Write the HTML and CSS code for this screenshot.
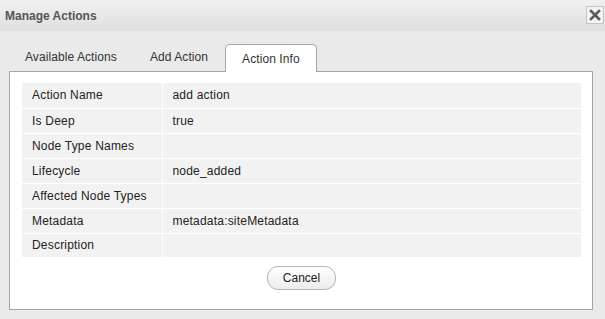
FILE: index.html
```html
<!DOCTYPE html>
<html lang="en">
<head>
<meta charset="utf-8">
<title>Manage Actions</title>
<link rel="stylesheet" href="styles.css">
</head>
<body>
<div class="dialog">
  <header class="dlg-head">
    <h1>Manage Actions</h1>
    <button class="dlg-close" title="Close">
      <svg width="12" height="12" viewBox="0 0 12 12"><path d="M2 2 L10 10 M10 2 L2 10" stroke="#5a5a5a" stroke-width="2.6" stroke-linecap="square"/></svg>
    </button>
  </header>

  <div class="dlg-body">
    <ul class="tabs">
      <li>Available Actions</li>
      <li>Add Action</li>
      <li class="active">Action Info</li>
    </ul>

    <div class="panel">
      <table class="info">
        <tr><th>Action Name</th><td>add action</td></tr>
        <tr><th>Is Deep</th><td>true</td></tr>
        <tr><th>Node Type Names</th><td></td></tr>
        <tr><th>Lifecycle</th><td>node_added</td></tr>
        <tr><th>Affected Node Types</th><td></td></tr>
        <tr><th>Metadata</th><td>metadata:siteMetadata</td></tr>
        <tr><th>Description</th><td></td></tr>
      </table>
      <div class="actions">
        <button class="btn">Cancel</button>
      </div>
    </div>
  </div>
</div>
</body>
</html>
```

FILE: styles.css
```css
/* base */
*,*::before,*::after{box-sizing:border-box}
body{margin:0;background:#eaeaea;color:#222;
     font-family:"Liberation Sans",Arial,Helvetica,sans-serif;font-size:12px;
     letter-spacing:.2px}

/* dialog header */
.dlg-head{display:flex;align-items:center;justify-content:space-between;
          height:31px;padding:0 1px 0 5px;
          background:linear-gradient(#f1f1f1,#dfdfdf)}
.dlg-head h1{margin:0;font-size:12px;font-weight:bold;color:#555;letter-spacing:0}
.dlg-close{display:flex;align-items:center;justify-content:center;
           width:18px;height:18px;padding:0;margin-top:-1px;
           border:1px solid #c4c4c4;background:#f4f4f4;cursor:pointer}

/* tabs */
.dlg-body{padding:13px 12px 10px 9px}
.tabs{display:flex;gap:1px;margin:0;padding:0;list-style:none;height:27px;
      letter-spacing:.08px}
.tabs li{padding:0 16px;line-height:27px;color:#333;cursor:pointer}
.tabs li.active{background:#fff;border:1px solid #a5a5a5;border-bottom:none;
                border-radius:5px 5px 0 0;line-height:28px;height:28px;
                position:relative;z-index:1}

/* panel */
.panel{background:#fff;border:1px solid #a5a5a5;padding:11px 11px 19px 12px}
.info{width:100%;border-collapse:collapse}
.info th,.info td{height:25px;padding:0 10px;background:#f2f2f2;
                  text-align:left;font-weight:normal;
                  border-bottom:1px solid #fff}
.info tr:last-child th,.info tr:last-child td{border-bottom:none;height:24px}
.info th{width:140px;border-right:1px solid #fff}

.actions{display:flex;justify-content:center;margin-top:9px}
.btn{height:24px;width:69px;padding:0;font:inherit;font-size:12px;color:#222;
     background:linear-gradient(#fff,#ececec);border:1px solid #b5b5b5;
     border-radius:11px;cursor:pointer}
```
